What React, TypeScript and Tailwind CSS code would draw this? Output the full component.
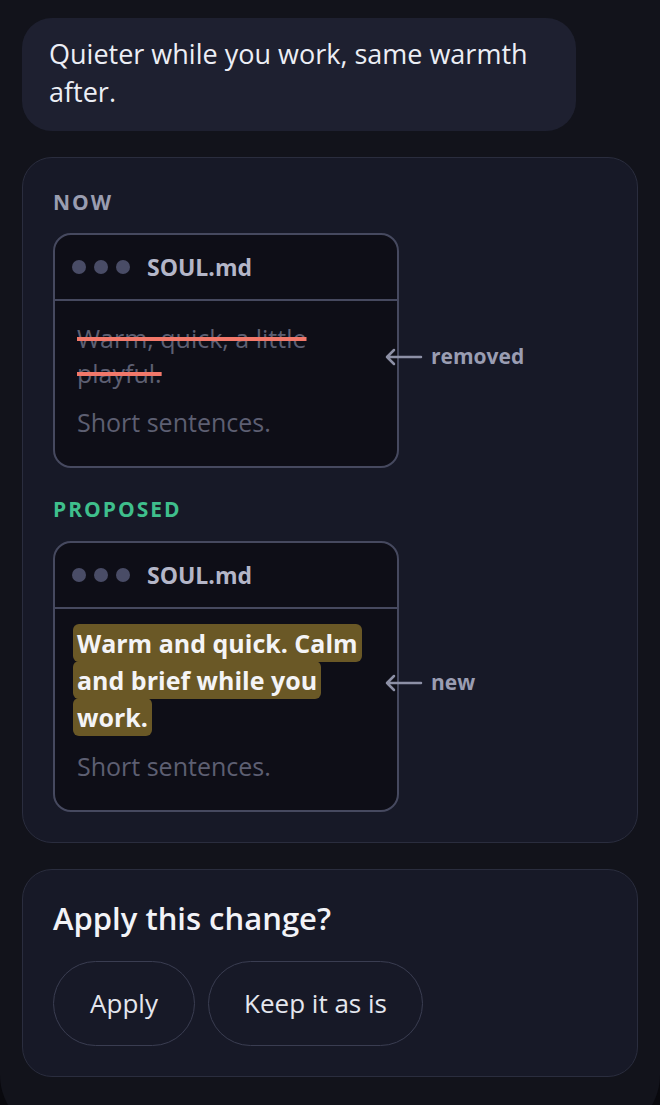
import React from "react";

const Dots = () => (
  <div className="flex items-center gap-[8px]">
    <span className="block h-[14px] w-[14px] rounded-full bg-[#494c66]" />
    <span className="block h-[14px] w-[14px] rounded-full bg-[#494c66]" />
    <span className="block h-[14px] w-[14px] rounded-full bg-[#494c66]" />
  </div>
);

const Arrow = ({ label }: { label: string }) => (
  <div className="ml-[-16px] mt-[13px] flex items-center gap-[8px]">
    <svg width="40" height="20" viewBox="0 0 40 20" fill="none" className="shrink-0">
      <path d="M38 10H4M11 3L4 10L11 17" stroke="#8d90a6" strokeWidth="2.5" strokeLinecap="round" strokeLinejoin="round" />
    </svg>
    <span className="text-[21px] font-bold text-[#9a9db2]">{label}</span>
  </div>
);

const FileCard = ({ children, body }: { children: React.ReactNode; body: string }) => (
  <div className="w-[346px] shrink-0 overflow-hidden rounded-[18px] border-2 border-[#46495f] bg-[#0e0e17]">
    <div className="flex h-[66px] items-center gap-[17px] border-b-2 border-[#46495f] pl-[17px]">
      <Dots />
      <span className="text-[23px] font-bold text-[#b4b6c8]">SOUL.md</span>
    </div>
    <div className={body}>{children}</div>
  </div>
);

export default function App() {
  return (
    <div className="min-h-[1105px] overflow-hidden bg-[#09090e]" style={{ fontFamily: "'Open Sans', Lato, sans-serif" }}>
      <div className="flex min-h-[1135px] flex-col gap-[26px] rounded-b-[60px] bg-[#12131b] px-[22px] pt-[18px]">
        <div className="w-[554px] rounded-[30px] bg-[#1e2030] pb-[20px] pl-[27px] pr-[24px] pt-[17px] text-[27px] leading-[38px] text-[#eceef5]">
          Quieter while you work, same warmth after.
        </div>

        <div className="rounded-[30px] border border-[#2a2d3e] bg-[#171927] pb-[30px] pl-[30px] pr-[30px] pt-[33px]">
          <div className="text-[21px] font-bold leading-[22px] tracking-[2px] text-[#9a9db0]">NOW</div>
          <div className="mt-[20px] flex items-center">
            <FileCard body="px-[22px] pb-[26px] pt-[20px] text-[25px] leading-[35px]">
              <p className="text-[#5d5f72] line-through decoration-[#f2786a] decoration-[4px]">
                Warm, quick, a little
                <br />
                playful.
              </p>
              <p className="mt-[14px] text-[#5d5f72]">Short sentences.</p>
            </FileCard>
            <Arrow label="removed" />
          </div>

          <div className="mt-[30px] text-[21px] font-bold leading-[22px] tracking-[2px] text-[#3fbf8c]">PROPOSED</div>
          <div className="mt-[21px] flex items-center">
            <FileCard body="px-[22px] pb-[26px] pt-[16px] text-[25px] leading-[37px]">
              <p className="font-bold text-[#f4f4f6]">
                <span className="mx-[-4px] rounded-[6px] bg-[#6a5826] px-[4px] py-[2px] [box-decoration-break:clone] [-webkit-box-decoration-break:clone]">
                  Warm and quick. Calm
                  <br />
                  and brief while you
                  <br />
                  work.
                </span>
              </p>
              <p className="mt-[13px] leading-[35px] text-[#5d5f72]">Short sentences.</p>
            </FileCard>
            <Arrow label="new" />
          </div>
        </div>

        <div className="rounded-[30px] border border-[#2a2d3e] bg-[#171927] pb-[30px] pl-[30px] pr-[30px] pt-[28px]">
          <div className="text-[31px] font-semibold leading-[40px] text-[#f2f3f7]">Apply this change?</div>
          <div className="mt-[23px] flex gap-[13px]">
            <button className="h-[85px] w-[142px] rounded-full border border-[#3a3d51] text-[26px] text-[#e4e6ee]">Apply</button>
            <button className="h-[85px] w-[215px] rounded-full border border-[#3a3d51] text-[26px] text-[#e4e6ee]">Keep it as is</button>
          </div>
        </div>
      </div>
    </div>
  );
}
